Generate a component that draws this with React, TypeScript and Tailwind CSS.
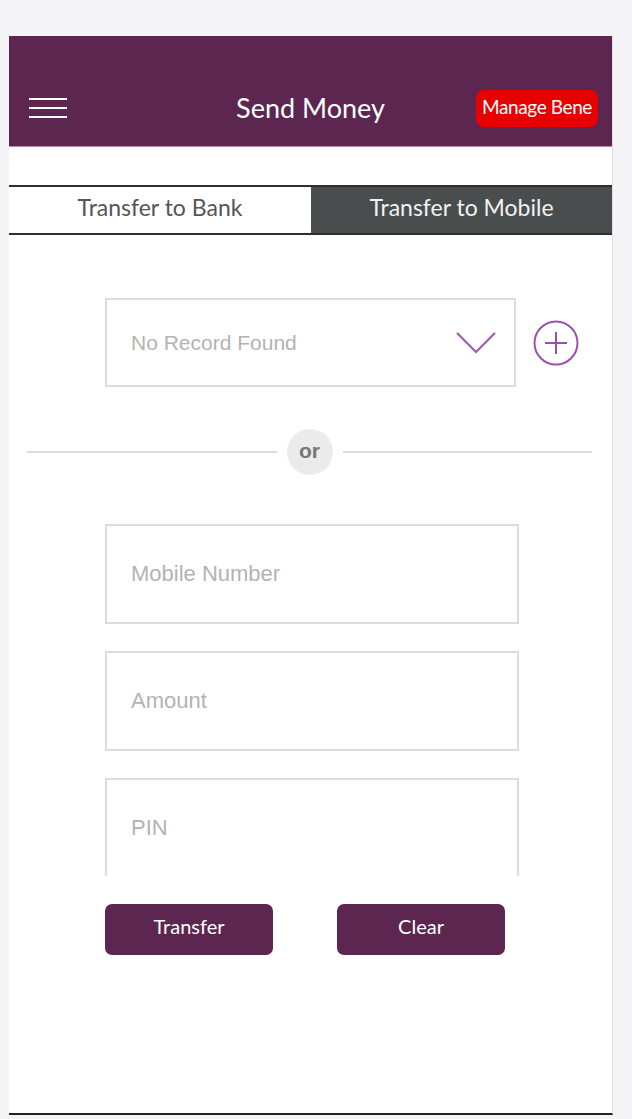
const font = { fontFamily: 'Lato, "Open Sans", sans-serif' };
const helv = { fontFamily: '"Liberation Sans", Arial, sans-serif' };

function Field({ label, open }: { label: string; open?: boolean }) {
  return (
    <div
      className={`w-[414px] border-2 border-[#dcdcdc] flex items-center pl-[24px] pb-[2px] ${open ? 'border-b-0 h-[98px]' : 'h-[100px]'}`}
    >
      <span className="text-[22px] text-[#b3b3b3]" style={helv}>
        {label}
      </span>
    </div>
  );
}

export default function App() {
  return (
    <div className="w-[632px] h-[1119px] bg-[#f4f4f6] pt-[36px] pl-[9px]">
      <div className="w-[604px] h-[1079px] bg-white border-r border-[#dedede] border-b-2 border-b-[#222] flex flex-col">
        {/* Header */}
        <div className="h-[111px] bg-[#5c2651] border-b border-[#b48aa8] pt-[53px]">
          <div className="grid grid-cols-[1fr_auto_1fr] items-center h-[38px]">
            <div className="pl-[20px] flex flex-col gap-[7px]">
              <span className="block w-[38px] h-[2px] bg-white" />
              <span className="block w-[38px] h-[2px] bg-white" />
              <span className="block w-[38px] h-[2px] bg-white" />
            </div>
            <span className="text-[27px] text-white leading-none pb-[2px]" style={font}>Send Money</span>
            <div className="flex justify-end pr-[14px]">
              <span
                className="h-[37px] px-[6px] rounded-[8px] bg-[#e60000] text-white text-[19px] flex items-center tracking-[-0.4px] pb-[1px]"
                style={font}
              >
                Manage Bene
              </span>
            </div>
          </div>
        </div>

        {/* Tabs */}
        <div className="mt-[38px] flex h-[50px] border-y-2 border-[#2e2e2e]" style={font}>
          <div className="w-[302px] flex items-center justify-center text-[23px] text-[#555] pb-[6px]">
            Transfer to Bank
          </div>
          <div className="flex-1 bg-[#4a4d4e] flex items-center justify-center text-[23px] text-[#f2f2f2] pb-[6px]">
            Transfer to Mobile
          </div>
        </div>

        {/* Beneficiary select */}
        <div className="mt-[63px] pl-[96px] flex items-center gap-[17px]">
          <div className="w-[411px] h-[89px] border-2 border-[#dcdcdc] flex items-center justify-between pl-[24px] pr-[18px]">
            <span className="text-[21px] text-[#b3b3b3]" style={helv}>
              No Record Found
            </span>
            <svg width="40" height="22" viewBox="0 0 40 22" fill="none">
              <path d="M1 1 L20 20 L39 1" stroke="#a15cb3" strokeWidth="2.2" />
            </svg>
          </div>
          <svg width="46" height="46" viewBox="0 0 46 46" fill="none">
            <circle cx="23" cy="23" r="21.5" stroke="#9b50ad" strokeWidth="2" />
            <path d="M12 23 H34 M23 12 V34" stroke="#9b50ad" strokeWidth="2" />
          </svg>
        </div>

        {/* Divider */}
        <div className="mt-[42px] pl-[18px] pr-[20px] flex items-center gap-[10px]">
          <div className="flex-1 h-[2px] bg-[#dcdcdc]" />
          <div
            className="w-[46px] h-[46px] rounded-full bg-[#ebebeb] flex items-center justify-center text-[21px] font-bold text-[#777] pb-[3px]"
            style={helv}
          >
            or
          </div>
          <div className="flex-1 h-[2px] bg-[#dcdcdc]" />
        </div>

        {/* Inputs */}
        <div className="mt-[49px] pl-[96px] flex flex-col gap-[27px]">
          <Field label="Mobile Number" />
          <Field label="Amount" />
          <Field label="PIN" open />
        </div>

        {/* Buttons */}
        <div className="mt-[28px] pl-[96px] flex gap-[64px]" style={font}>
          <button className="w-[168px] h-[51px] rounded-[7px] bg-[#5c2651] text-white text-[20px] pb-[7px]">Transfer</button>
          <button className="w-[168px] h-[51px] rounded-[7px] bg-[#5c2651] text-white text-[20px] pb-[7px]">Clear</button>
        </div>
      </div>
    </div>
  );
}
